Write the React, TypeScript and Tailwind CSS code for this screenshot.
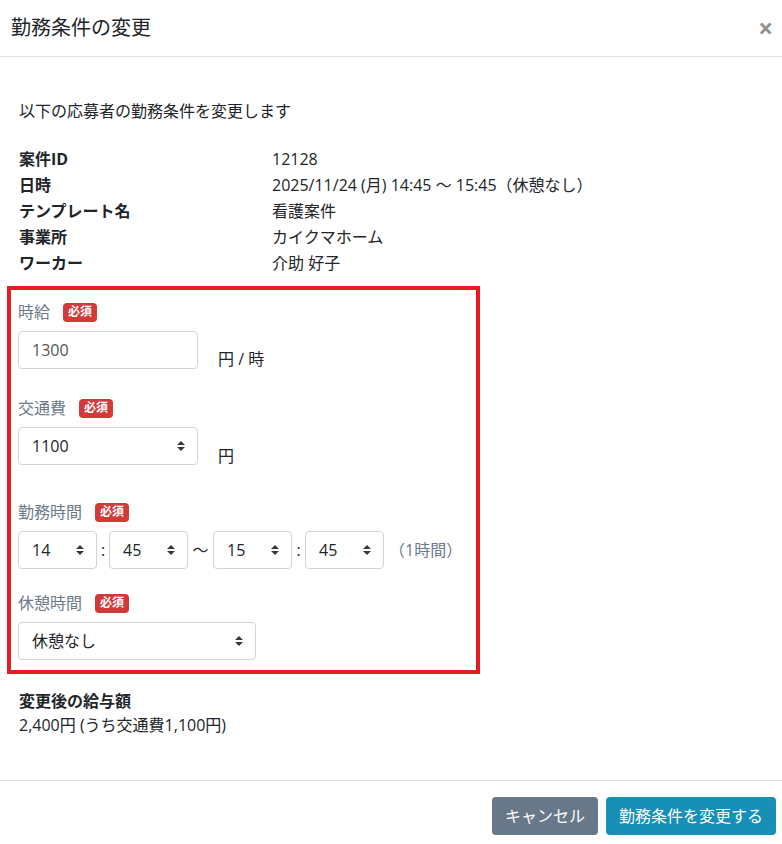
import React from "react";

const Arrow = () => (
  <svg width="8" height="10" viewBox="0 0 8 10" className="shrink-0">
    <polygon points="0,4 4,0 8,4" fill="#343a40" />
    <polygon points="0,6 4,10 8,6" fill="#343a40" />
  </svg>
);

const Select = ({ value, w }: { value: string; w: string }) => (
  <div
    className={`${w} h-[38px] border border-[#ced4da] rounded-[4px] bg-white flex items-center justify-between pl-[13px] pr-[12px] text-[16px] text-[#212529]`}
  >
    <span>{value}</span>
    <Arrow />
  </div>
);

const Badge = () => (
  <span className="inline-flex items-center justify-center w-[34px] h-[19px] rounded-[4px] bg-[#d23a3a] text-white text-[12px] font-bold leading-none">
    必須
  </span>
);

const Label = ({ text }: { text: string }) => (
  <div className="h-[20px] flex items-center gap-[13px] mb-[9px]">
    <span className="text-[16px] text-[#6c7a89]">{text}</span>
    <Badge />
  </div>
);

export default function App() {
  const rows: [string, string][] = [
    ["案件ID", "12128"],
    ["日時", "2025/11/24 (月) 14:45 〜 15:45（休憩なし）"],
    ["テンプレート名", "看護案件"],
    ["事業所", "カイクマホーム"],
    ["ワーカー", "介助 好子"],
  ];
  return (
    <div className="w-[782px] h-[844px] bg-white text-[#212529] font-['Open_Sans','Noto_Sans_CJK_JP',sans-serif] overflow-hidden">
      <div className="h-[57px] border-b border-[#dee2e6] flex items-center justify-between pl-[11px] pr-[9px]">
        <h1 className="text-[20px] leading-[30px] font-normal">勤務条件の変更</h1>
        <span className="text-[26px] font-bold text-[#909090] leading-none">×</span>
      </div>

      <div className="px-[19px] pt-[42px] pb-[43px]">
        <p className="text-[16px] leading-6">以下の応募者の勤務条件を変更します</p>

        <dl className="mt-[23px] grid grid-cols-[253px_1fr] text-[16px] leading-[26px]">
          {rows.map(([k, v]) => (
            <React.Fragment key={k}>
              <dt className="font-bold">{k}</dt>
              <dd>{v}</dd>
            </React.Fragment>
          ))}
        </dl>

        <div className="-ml-[12px] w-[473px] mt-[10px] border-[4px] border-[#e51c23] pt-[12px] pb-[10px] pl-[7px]">
          <div>
            <Label text="時給" />
            <div className="flex items-start">
              <div className="w-[180px] h-[38px] border border-[#ced4da] rounded-[4px] flex items-center pl-[13px] text-[16px] text-[#555]">
                1300
              </div>
              <span className="ml-[20px] pt-[16px] leading-6 text-[16px]">円 / 時</span>
            </div>
          </div>

          <div className="mt-[27px]">
            <Label text="交通費" />
            <div className="flex items-start">
              <Select value="1100" w="w-[180px]" />
              <span className="ml-[20px] pt-[17px] leading-6 text-[16px]">円</span>
            </div>
          </div>

          <div className="mt-[34px]">
            <Label text="勤務時間" />
            <div className="flex items-center text-[16px]">
              <Select value="14" w="w-[79px]" />
              <span className="w-[12px] text-center">:</span>
              <Select value="45" w="w-[79px]" />
              <span className="w-[25px] text-center">〜</span>
              <Select value="15" w="w-[79px]" />
              <span className="w-[13px] text-center">:</span>
              <Select value="45" w="w-[79px]" />
              <span className="ml-[5px] text-[#6c7a89]">（1時間）</span>
            </div>
          </div>

          <div className="mt-[24px]">
            <Label text="休憩時間" />
            <Select value="休憩なし" w="w-[238px]" />
          </div>
        </div>

        <div className="mt-[15px] text-[16px] leading-6">
          <div className="font-bold">変更後の給与額</div>
          <div>2,400円 (うち交通費1,100円)</div>
        </div>
      </div>

      <div className="border-t border-[#dee2e6] pt-[16px] pr-[6px] flex justify-end gap-[8px]">
        <button className="h-[38px] px-[13px] rounded-[4px] bg-[#687889] text-white text-[16px]">
          キャンセル
        </button>
        <button className="h-[38px] px-[13px] rounded-[4px] bg-[#178fb7] text-white text-[16px]">
          勤務条件を変更する
        </button>
      </div>
    </div>
  );
}
